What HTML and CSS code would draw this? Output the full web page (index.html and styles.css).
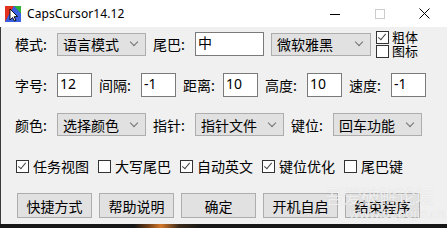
FILE: index.html
```html
<!DOCTYPE html>
<html lang="zh-CN">
<head>
<meta charset="utf-8">
<title>CapsCursor14.12</title>
<link rel="stylesheet" href="styles.css">
</head>
<body>
<div class="window">
  <div class="titlebar">
    <svg class="appicon" width="16" height="16" viewBox="0 0 16 16">
      <rect x="0" y="0" width="16" height="16" fill="#2a4fd0"/>
      <polygon points="0,0 9,0 0,16" fill="#e2321e"/>
      <polygon points="9,0 16,0 16,8" fill="#2fb43a"/>
      <polygon points="0,16 9,0 16,8 16,16" fill="#3a5fe0"/>
      <polygon points="5,3 5,14 7.5,11.5 9.5,15 11,14.2 9,10.8 12.5,10.5" fill="#fff" stroke="#000" stroke-width="0.9" stroke-linejoin="round"/>
    </svg>
    <span class="title">CapsCursor14.12</span>
    <div class="controls">
      <span class="ctl"><svg width="10" height="10" viewBox="0 0 10 10"><line x1="0" y1="5.5" x2="10" y2="5.5" stroke="#000" stroke-width="1"/></svg></span>
      <span class="ctl"><svg width="10" height="10" viewBox="0 0 10 10"><rect x="0.5" y="0.5" width="9" height="9" fill="none" stroke="#ccc" stroke-width="1"/></svg></span>
      <span class="ctl"><svg width="11" height="11" viewBox="0 0 11 11"><path d="M0.5 0.5 L10.5 10.5 M10.5 0.5 L0.5 10.5" stroke="#000" stroke-width="1"/></svg></span>
    </div>
  </div>
  <div class="client">
    <div class="row r1">
      <span class="lbl">模式:</span>
      <div class="sel w89"><span>语言模式</span><i class="chev"></i></div>
      <span class="lbl gap">尾巴:</span>
      <div class="inp w69">中</div>
      <div class="sel w100 gap"><span>微软雅黑</span><i class="chev"></i></div>
      <div class="chkcol">
        <label class="chk"><span class="box on"></span>粗体</label>
        <label class="chk"><span class="box"></span>图标</label>
      </div>
    </div>
    <div class="row r2">
      <span class="lbl">字号:</span>
      <div class="inp w35">12</div>
      <span class="lbl gap">间隔:</span>
      <div class="inp w35">-1</div>
      <span class="lbl gap2">距离:</span>
      <div class="inp w35">10</div>
      <span class="lbl gap">高度:</span>
      <div class="inp w35">10</div>
      <span class="lbl gap">速度:</span>
      <div class="inp w35">-1</div>
    </div>
    <div class="row r3">
      <span class="lbl">颜色:</span>
      <div class="sel w89"><span>选择颜色</span><i class="chev"></i></div>
      <span class="lbl gap">指针:</span>
      <div class="sel w89"><span>指针文件</span><i class="chev"></i></div>
      <span class="lbl gap">键位:</span>
      <div class="sel w89"><span>回车功能</span><i class="chev"></i></div>
    </div>
    <div class="row r4">
      <label class="opt"><span class="box on"></span>任务视图</label>
      <label class="opt"><span class="box"></span>大写尾巴</label>
      <label class="opt"><span class="box on"></span>自动英文</label>
      <label class="opt"><span class="box on"></span>键位优化</label>
      <label class="opt"><span class="box"></span>尾巴键</label>
    </div>
    <div class="row r5">
      <button class="btn">快捷方式</button>
      <button class="btn">帮助说明</button>
      <button class="btn">确定</button>
      <button class="btn">开机自启</button>
      <button class="btn">结束程序</button>
    </div>
    <div class="watermark">
      <div class="wm1">吾爱破解论坛</div>
      <div class="wm2">www.52pojie.cn</div>
    </div>
  </div>
  <div class="taskstrip"></div>
</div>
</body>
</html>
```
FILE: styles.css
```css
html, body {
  margin: 0;
  padding: 0;
}
body {
  width: 447px;
  height: 228px;
  overflow: hidden;
  background: #1b1b1b;
  font-family: "Noto Sans CJK SC", "Noto Sans", sans-serif;
  font-size: 14px;
  color: #000;
}
.window {
  width: 447px;
  height: 228px;
  display: flex;
  flex-direction: column;
}
.titlebar {
  height: 27px;
  background: #fff;
  display: flex;
  align-items: center;
  flex: none;
}
.appicon {
  margin-left: 5px;
  flex: none;
}
.title {
  margin-left: 6px;
  font-family: "Noto Sans", sans-serif;
  font-size: 12px;
  color: #000;
  letter-spacing: 0.1px;
}
.controls {
  margin-left: auto;
  display: flex;
  height: 27px;
}
.ctl {
  width: 45px;
  display: flex;
  align-items: center;
  justify-content: center;
}
.client {
  position: relative;
  flex: none;
  height: 197px;
  background: #f0f0f0;
  border-left: 1px solid #3a3a3a;
  box-sizing: border-box;
  padding-left: 14px;
  display: flex;
  flex-direction: column;
}
.taskstrip {
  flex: 1;
  background: linear-gradient(90deg, #161616 0%, #161616 30%, #6a3a14 33%, #d4782a 36%, #3a2a1a 40%, #161616 45%, #161616 100%);
}
.row {
  display: flex;
  align-items: center;
  white-space: nowrap;
}
.r1 { margin-top: 3px; height: 28px; }
.r2 { margin-top: 15px; height: 24px; }
.r3 { margin-top: 16px; height: 23px; }
.r4 { margin-top: 22px; height: 17px; }
.r5 { margin-top: 18px; height: 25px; }

.lbl {
  width: 42px;
  flex: none;
  line-height: 18px;
}
.gap { margin-left: 7px; }
.gap2 { margin-left: 7px; width: 40px; }

.sel {
  flex: none;
  height: 23px;
  box-sizing: border-box;
  background: #e1e1e1;
  border: 1px solid #adadad;
  display: flex;
  align-items: center;
  padding-left: 5px;
  padding-right: 6px;
  line-height: 18px;
}
.sel span { flex: 1; }
.chev {
  width: 5px;
  height: 5px;
  border-right: 1px solid #707070;
  border-bottom: 1px solid #707070;
  transform: rotate(45deg);
  margin-top: -4px;
  margin-right: 2px;
}
.w89 { width: 89px; }
.w100 { width: 100px; }
.w69 { width: 69px; }
.w35 { width: 35px; }

.inp {
  flex: none;
  height: 24px;
  box-sizing: border-box;
  background: #fff;
  border: 1px solid #7a7a7a;
  padding-left: 2px;
  line-height: 20px;
  font-family: "Noto Sans", "Noto Sans CJK SC", sans-serif;
  font-size: 14px;
}

.chkcol {
  margin-left: 5px;
  display: flex;
  flex-direction: column;
}
.chk {
  display: flex;
  align-items: center;
  height: 14px;
  line-height: 14px;
  font-size: 13px;
}
.chk .box { margin-right: 3px; }

.box {
  width: 13px;
  height: 13px;
  box-sizing: border-box;
  border: 1px solid #333;
  background: #fff;
  flex: none;
  position: relative;
}
.box.on::after {
  content: "";
  position: absolute;
  left: 3px;
  top: 0px;
  width: 3px;
  height: 7px;
  border-right: 1.5px solid #444;
  border-bottom: 1.5px solid #444;
  transform: rotate(40deg);
}

.opt {
  display: flex;
  align-items: center;
  margin-right: 9px;
  line-height: 17px;
}
.opt .box { margin-right: 4px; }
.opt:nth-child(1) { margin-left: 1px; }

.btn {
  flex: none;
  width: 75px;
  height: 25px;
  box-sizing: border-box;
  background: #e1e1e1;
  border: 1px solid #adadad;
  font-family: "Noto Sans CJK SC", sans-serif;
  font-size: 14px;
  padding: 0;
  margin-right: 7px;
  color: #000;
}
.btn:first-child { margin-left: 2px; }

.watermark {
  position: absolute;
  left: 324px;
  top: 158px;
  color: rgba(255, 255, 255, 0.7);
  text-shadow: 0 0 1px rgba(140, 140, 140, 0.3);
  pointer-events: none;
}
.wm1 {
  font-size: 19px;
  line-height: 21px;
  letter-spacing: -1px;
}
.wm2 {
  font-family: "Noto Sans", sans-serif;
  font-size: 13px;
  line-height: 15px;
  margin-left: 24px;
}
```
